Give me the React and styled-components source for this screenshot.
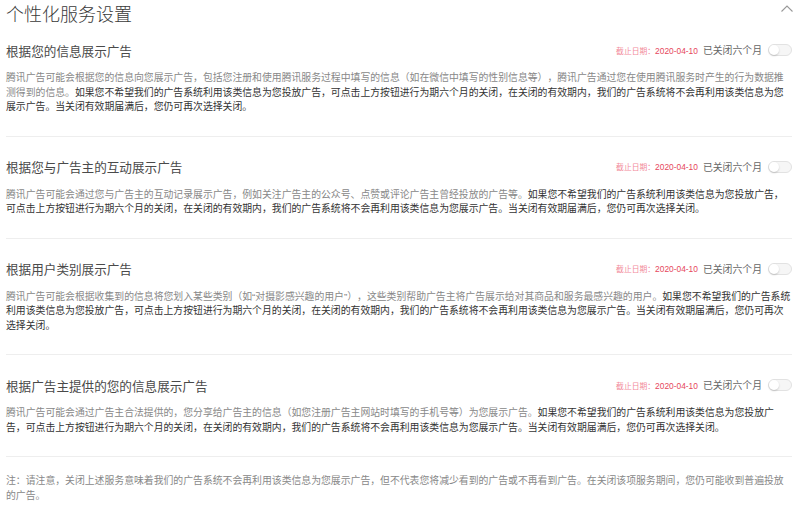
import React from 'react';
import styled, { createGlobalStyle } from 'styled-components';

const GlobalStyle = createGlobalStyle`
    body {
        margin: 0;
        background: #fff;
        font-family: "Liberation Sans", "Noto Sans CJK SC", sans-serif;
        text-spacing-trim: space-all;
    }
`;

const Page = styled.div`
    width: 800px;
    box-sizing: border-box;
    padding: 0 8px 0 6px;
`;

const TitleBar = styled.div`
    display: flex;
    justify-content: space-between;
    align-items: flex-start;
    height: 30px;
`;

const Title = styled.div`
    font-size: 18px;
    line-height: 30px;
    font-weight: 300;
    color: #3a3a3a;
`;

const Collapse = styled.svg`
    margin-top: 5px;
    margin-right: -1px;
`;

const Section = styled.div`
    padding: ${p => (p.$first ? '11px' : '21px')} 0 21px;
    border-bottom: 1px solid #eeeeee;
`;

const Header = styled.div`
    display: flex;
    justify-content: space-between;
    align-items: center;
    height: 18px;
    margin-bottom: 12px;
`;

const Heading = styled.div`
    font-size: 12.6px;
    color: #4a4a4a;
`;

const Meta = styled.div`
    display: flex;
    align-items: center;
`;

const Deadline = styled.span`
    font-size: 7.8px;
    color: #f28a9b;
`;

const DateText = styled.span`
    font-size: 8.4px;
    color: #e6475c;
`;

const Status = styled.span`
    font-size: 9.85px;
    color: #666;
    margin-left: 5px;
`;

const Switch = styled.div`
    width: 24px;
    height: 12px;
    box-sizing: border-box;
    margin-left: 6px;
    border: 1px solid #e2e2e2;
    border-radius: 6px;
    background: #f6f6f6;
    position: relative;

    &::after {
        content: '';
        position: absolute;
        left: 0;
        top: 0;
        width: 10px;
        height: 10px;
        border-radius: 50%;
        background: #fff;
        box-shadow: 0 1px 2px rgba(0, 0, 0, 0.18);
    }
`;

const Body = styled.p`
    margin: 0;
    font-size: 9.85px;
    line-height: 14.5px;
    color: #888;
`;

const Strong = styled.span`
    color: #333;
`;

const Note = styled.p`
    margin: 0;
    padding-top: 16px;
    font-size: 9.85px;
    line-height: 15px;
    color: #888;
`;

const OPT_OUT = '如果您不希望我们的广告系统利用该类信息为您投放广告，可点击上方按钮进行为期六个月的关闭，在关闭的有效期内，我们的广告系统将不会再利用该类信息为您展示广告。当关闭有效期届满后，您仍可再次选择关闭。';

const items = [
    {
        title: '根据您的信息展示广告',
        intro: '腾讯广告可能会根据您的信息向您展示广告，包括您注册和使用腾讯服务过程中填写的信息（如在微信中填写的性别信息等），腾讯广告通过您在使用腾讯服务时产生的行为数据推测得到的信息。',
    },
    {
        title: '根据您与广告主的互动展示广告',
        intro: '腾讯广告可能会通过您与广告主的互动记录展示广告，例如关注广告主的公众号、点赞或评论广告主曾经投放的广告等。',
    },
    {
        title: '根据用户类别展示广告',
        intro: '腾讯广告可能会根据收集到的信息将您划入某些类别（如“对摄影感兴趣的用户”），这些类别帮助广告主将广告展示给对其商品和服务最感兴趣的用户。',
    },
    {
        title: '根据广告主提供的您的信息展示广告',
        intro: '腾讯广告可能会通过广告主合法提供的，您分享给广告主的信息（如您注册广告主网站时填写的手机号等）为您展示广告。',
    },
];

function AdSetting({ title, intro, first }) {
    return (
        <Section $first={first}>
            <Header>
                <Heading>{title}</Heading>
                <Meta>
                    <Deadline>截止日期：<DateText>2020-04-10</DateText></Deadline>
                    <Status>已关闭六个月</Status>
                    <Switch />
                </Meta>
            </Header>
            <Body>
                {intro}
                <Strong>{OPT_OUT}</Strong>
            </Body>
        </Section>
    );
}

export default function App() {
    return (
        <Page>
            <GlobalStyle />
            <TitleBar>
                <Title>个性化服务设置</Title>
                <Collapse width="12" height="7" viewBox="0 0 12 7">
                    <polyline points="0.5,6.5 6,1 11.5,6.5" fill="none" stroke="#999" strokeWidth="1.1" />
                </Collapse>
            </TitleBar>
            {items.map((item, i) => (
                <AdSetting key={item.title} {...item} first={i === 0} />
            ))}
            <Note>
                注：请注意，关闭上述服务意味着我们的广告系统不会再利用该类信息为您展示广告，但不代表您将减少看到的广告或不再看到广告。在关闭该项服务期间，您仍可能收到普遍投放的广告。
            </Note>
        </Page>
    );
}
